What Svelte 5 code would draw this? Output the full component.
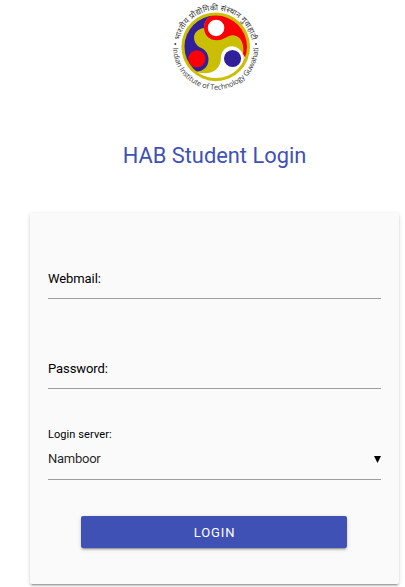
<script>
  let webmail = $state('');
  let password = $state('');
</script>

<main>
  <svg class="logo" viewBox="0 0 300 285" role="img" aria-label="Indian Institute of Technology Guwahati">
    <defs>
      <path id="arc-top" d="M43.7 122 A110 110 0 0 1 260.3 122" />
      <path id="arc-bottom" d="M24 141 A128 128 0 0 0 280 141" />
      <clipPath id="disc"><circle cx="153" cy="139" r="91" /></clipPath>
    </defs>
    <g transform="translate(-5.4 -2.7) scale(1.03)">
      <circle cx="153" cy="139" r="100" fill="#cbbf05" />
      <g clip-path="url(#disc)">
        <path fill="#32209a" d="M150 45 C126 53 119 67 119 84 C80 91 84 128 108 141 C124 148 132 160 132 176 C132 197 116 211 97 211 L70 208 L50 150 L70 60 Z" />
        <path fill="#fb0007" d="M119 84 C119 62 134 49 150 45 L210 50 L262 130 L248 203 C237 197 229 185 229 173 C240 143 230 108 207 106 C189 103 180 120 157 120 C135 120 119 105 119 84 Z" />
        <path fill="#fff" d="M248 195 C240 171 227 137 201 137 C180 138 168 153 168 173 C168 199 147 217 119 216 C105 216 96 212 88 211 L67 205 L100 240 L190 250 L250 208 Z" />
        <path fill="#cbbf05" d="M230 150 L234 180 L248 190 L242 211 C233 194 237 173 230 150 Z" />
      </g>
      <circle cx="154" cy="84" r="24" fill="#fff" />
      <circle cx="98" cy="174" r="25" fill="#fb0007" />
      <circle cx="202" cy="173" r="25" fill="#32209a" />
    </g>
    <text class="hindi"><textPath href="#arc-top" textLength="304" startOffset="1">भारतीय प्रौद्योगिकी संस्थान गुवाहाटी</textPath></text>
    <text class="english"><textPath href="#arc-bottom" textLength="398" startOffset="2">Indian Institute of Technology Guwahati</textPath></text>
    <circle cx="31" cy="132" r="3" fill="#444" />
    <circle cx="273" cy="132" r="3" fill="#444" />
  </svg>

  <h1>HAB Student Login</h1>

  <form class="card" onsubmit={(e) => e.preventDefault()}>
    <div class="field">
      <label for="webmail">Webmail:</label>
      <input id="webmail" type="text" bind:value={webmail} />
    </div>
    <div class="field second">
      <label for="password">Password:</label>
      <input id="password" type="password" bind:value={password} />
    </div>
    <div class="server">
      <span class="caption">Login server:</span>
      <div class="select"><span>Namboor</span><svg width="7" height="7" viewBox="0 0 7 7"><path d="M0 0h7L3.5 7z" /></svg></div>
    </div>
    <button type="submit">LOGIN</button>
  </form>
</main>

<style>
  :global(body) { background: #fff; overflow: hidden; }
  main {
    box-sizing: border-box;
    width: 405px;
    height: 587px;
    padding-left: 30px;
    display: flex;
    flex-direction: column;
    font-family: Roboto, "Liberation Sans", sans-serif;
    font-size: 13px;
    color: #000;
    overflow: hidden;
  }
  .logo { width: 100px; height: 95px; margin-left: 135px; flex: none; }
  .logo text { fill: #333; }
  .hindi { font-family: "Noto Sans Devanagari", "Noto Sans", sans-serif; font-size: 23.5px; }
  .english { font-family: "Open Sans", sans-serif; font-size: 22px; font-weight: 500; }
  h1 {
    width: 369px;
    margin: 43px 0 0;
    font-size: 21.85px;
    line-height: 36px;
    font-weight: 400;
    color: #3f51b5;
    text-align: center;
  }
  .card {
    box-sizing: border-box;
    width: 369px;
    height: 371px;
    margin-top: 39px;
    padding: 48px 18px 0;
    background: #fafafa;
    border-radius: 2px;
    box-shadow: 0 2px 2px 0 rgba(0,0,0,.14), 0 1px 5px 0 rgba(0,0,0,.12), 0 3px 1px -2px rgba(0,0,0,.2);
  }
  .field {
    display: flex;
    align-items: center;
    box-sizing: border-box;
    height: 38px;
    border-bottom: 1px solid #9e9e9e;
  }
  .field.second { margin-top: 52px; }
  label { padding-bottom: 2px; letter-spacing: -.08px; }
  input { flex: 1; min-width: 0; border: 0; outline: 0; background: transparent; font: inherit; }
  .server { padding-top: 39px; }
  .caption { display: block; font-size: 11px; letter-spacing: .08px; line-height: 14px; }
  .select {
    display: flex;
    align-items: center;
    justify-content: space-between;
    box-sizing: border-box;
    height: 38px;
    padding-bottom: 4px;
    border-bottom: 1px solid #9e9e9e;
    color: rgba(0,0,0,.87);
  }
  .select span { letter-spacing: -.25px; }
  .select svg { fill: #000; margin-top: 2px; }
  button {
    display: block;
    width: 266px;
    height: 32px;
    margin: 36px 0 0 33px;
    padding: 1px 0 0 1px;
    border: 0;
    border-radius: 2px;
    background: #3f51b5;
    color: #fff;
    font: 400 13px/31px Roboto, sans-serif;
    letter-spacing: .9px;
    box-shadow: 0 2px 2px 0 rgba(0,0,0,.14), 0 1px 5px 0 rgba(0,0,0,.12), 0 3px 1px -2px rgba(0,0,0,.2);
  }
</style>
